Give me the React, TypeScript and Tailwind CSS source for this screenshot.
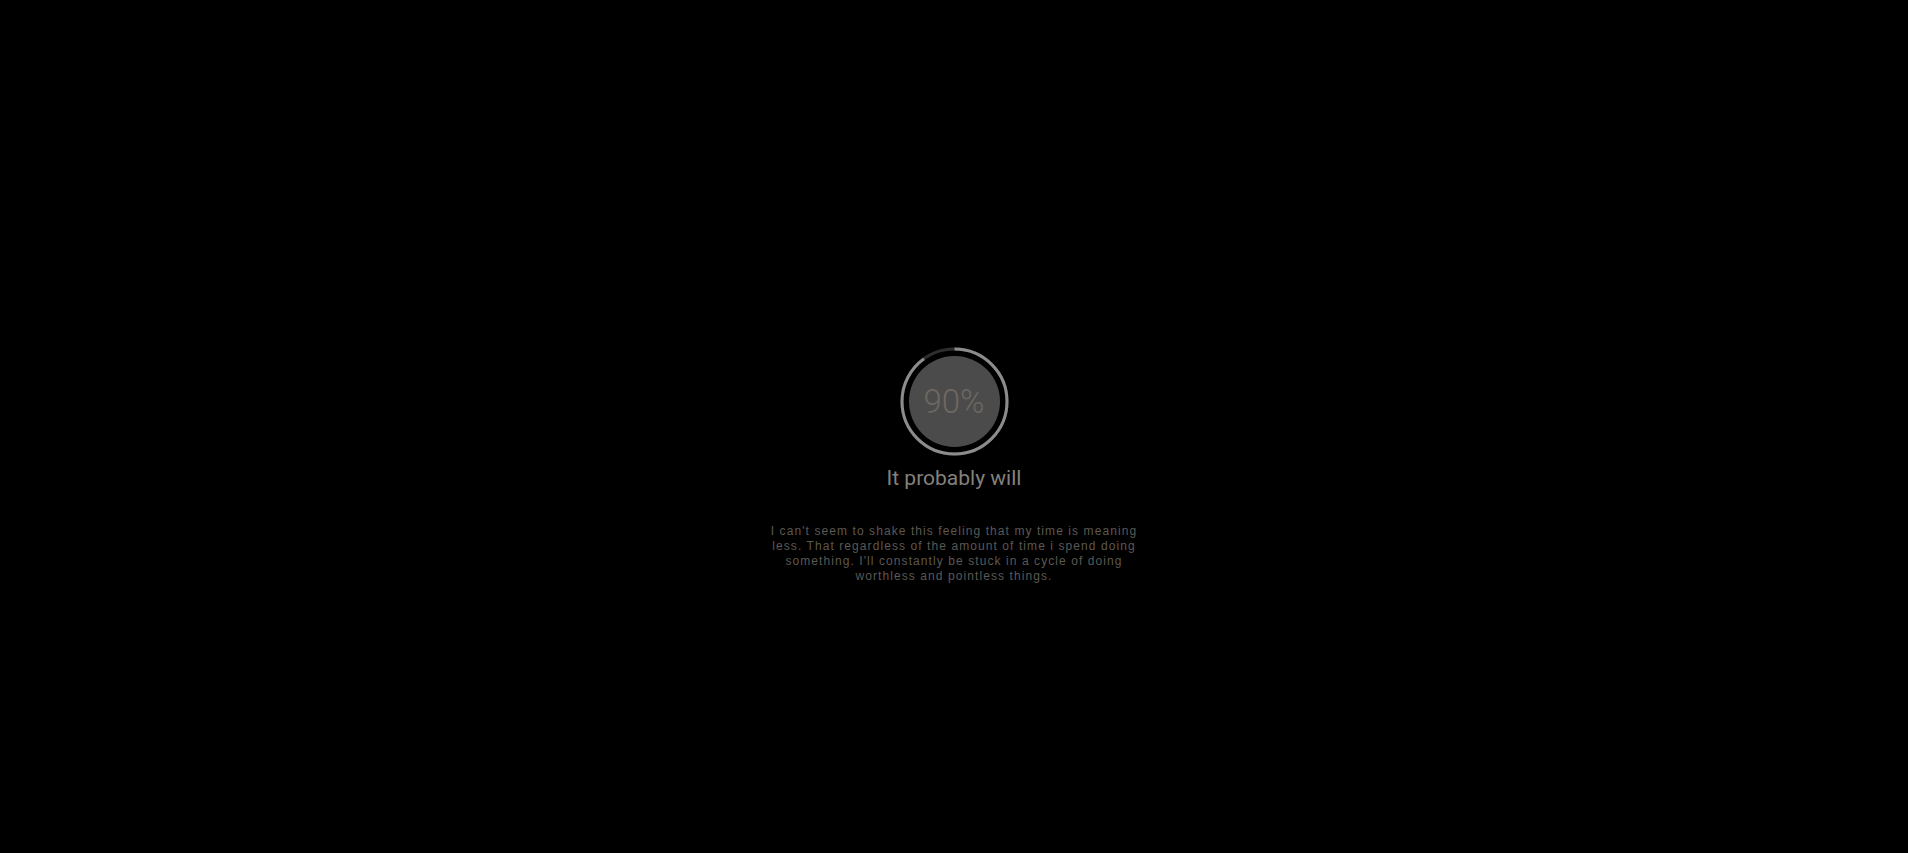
import React from 'react';

function ProgressRing({ percent }: { percent: number }) {
  const r = 52.5;
  const c = 2 * Math.PI * r;
  const done = (c * percent) / 100;

  return (
    <div className="relative w-[109px] h-[109px] flex items-center justify-center">
      <svg width="109" height="109" viewBox="0 0 109 109" className="absolute inset-0 -rotate-90">
        <circle cx="54.5" cy="54.5" r={r} fill="none" stroke="#2e2e2e" strokeWidth="3" />
        <circle
          cx="54.5"
          cy="54.5"
          r={r}
          fill="none"
          stroke="#8c8c8c"
          strokeWidth="3"
          strokeDasharray={`${done} ${c}`}
        />
      </svg>
      <div className="w-[91px] h-[91px] rounded-full bg-[#4b4b4b] flex items-center justify-center">
        <span className="text-[33px] font-light text-[#6e6862] font-['Roboto',sans-serif] leading-none">{percent}%</span>
      </div>
    </div>
  );
}

export default function App() {
  return (
    <div className="min-h-screen w-full bg-black flex flex-col items-center pt-[347px]">
      <ProgressRing percent={90} />
      <h1 className="mt-[8px] text-[21px] leading-[28px] text-[#85807b] font-['Roboto',sans-serif]">
        It probably will
      </h1>
      <p className="mt-[32px] max-w-[380px] text-center text-[12px] leading-[15px] tracking-[0.09em] text-[#5c5853] font-['Liberation_Sans',sans-serif]">
        I can't seem to shake this feeling that my time is meaning less. That regardless of the amount of time i
        spend doing something. I'll constantly be stuck in a cycle of doing worthless and pointless things.
      </p>
    </div>
  );
}
